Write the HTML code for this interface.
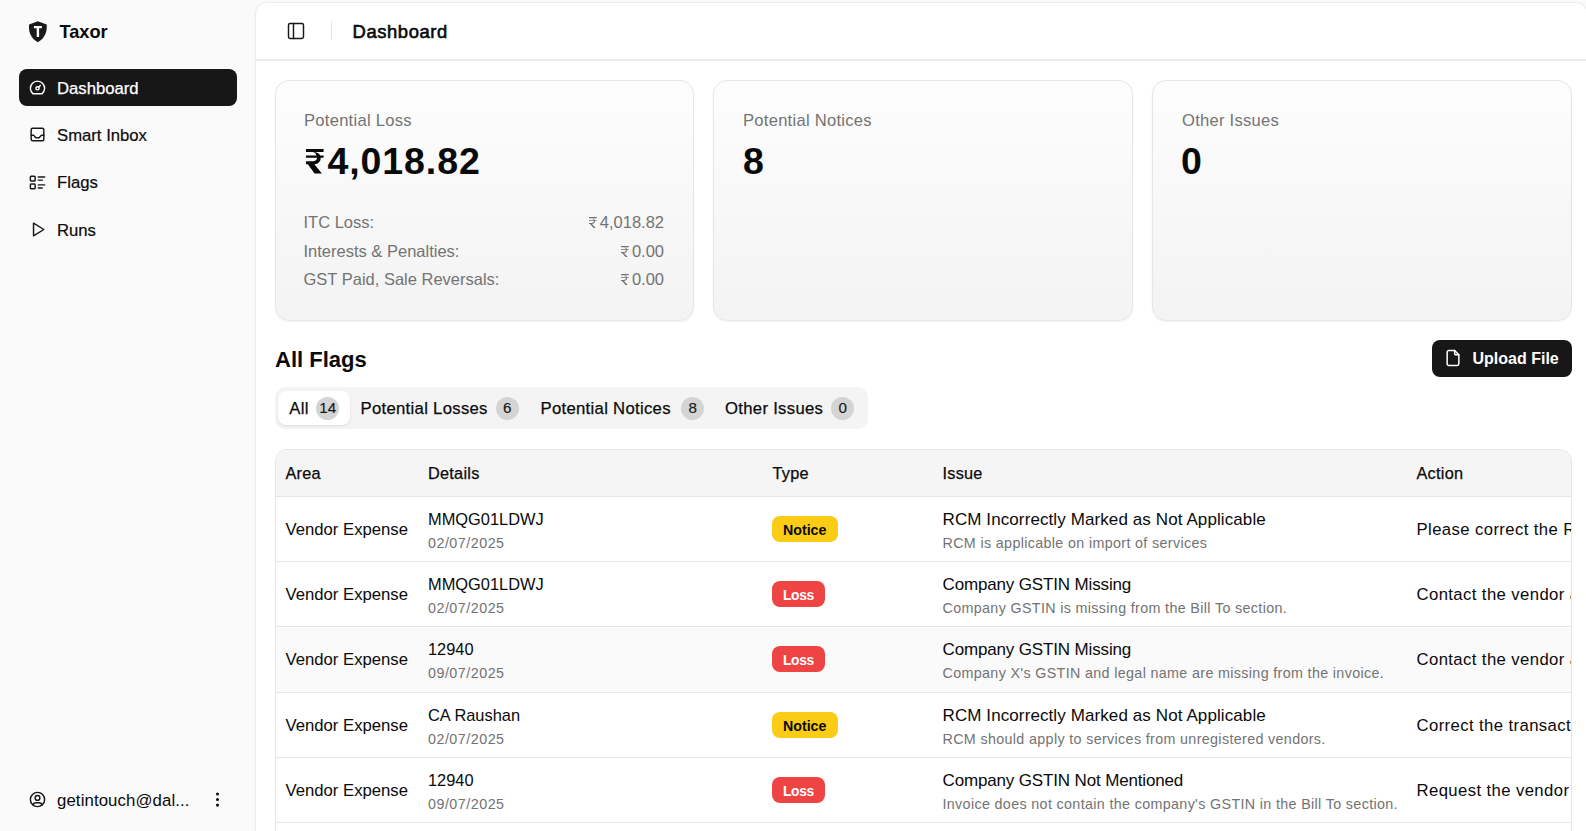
<!DOCTYPE html><html><head><meta charset="utf-8"><style>
*{box-sizing:border-box;margin:0;padding:0}
html,body{width:1586px;height:831px;overflow:hidden;background:#fafafa;font-family:"Liberation Sans",sans-serif;color:#0a0a0a}
.t{position:absolute;white-space:nowrap}
.ab{position:absolute;display:block}
.panel{position:absolute;left:255px;top:2px;width:1333px;height:900px;background:#fff;border-radius:12px;border:1px solid #ebebeb;box-shadow:0 1px 3px rgba(0,0,0,.03)}
.card{position:absolute;top:80px;height:241px;border:1px solid #e6e6e6;border-radius:14px;background:linear-gradient(to top,#f3f3f3,#fdfdfd);box-shadow:0 1px 2px rgba(0,0,0,.05)}
.badge{position:absolute;border-radius:50%;background:#d4d4d4;width:23px;height:23px}
.tbl{position:absolute;left:275px;top:449px;width:1297px;height:420px;border:1px solid #e6e6e6;border-radius:12px;overflow:hidden;background:#fff}
.row{position:absolute;left:0;width:100%;border-top:1px solid #e6e6e6}
.pill{position:absolute;height:26px;border-radius:8px}
</style></head><body>
<svg class="ab" style="left:29px;top:21px" width="18" height="22" viewBox="0 0 18 22"><path d="M8.8 0.2L17.7 3.4C17.9 6.5 17.6 10 16.5 12.8C15 16.5 12.5 19.3 8.8 21.2C5.1 19.3 2.6 16.5 1.1 12.8C0 10 -0.2 6.5 0.1 3.4Z" fill="#1a1a1a"/><path d="M4.9 4.9H12.9V7.2H10.1V15.9H7.7V7.2H4.9Z" fill="#fff"/></svg>
<div class="t" style="left:59.50px;top:23px;font-size:18.2px;line-height:18.2px;color:#0a0a0a;font-weight:700;">Taxor</div>
<div class="ab" style="left:19px;top:69px;width:218px;height:37px;background:#171717;border-radius:8px"></div>
<svg class="ab" style="left:28px;top:78.4px" width="19" height="19" viewBox="0 0 24 24" fill="none" stroke="#fff" stroke-width="1.8" stroke-linecap="round" stroke-linejoin="round"><path d="M12 13m-2 0a2 2 0 1 0 4 0a2 2 0 1 0 -4 0"/><path d="M13.45 11.55l2.05 -2.05"/><path d="M6.4 20a9 9 0 1 1 11.2 0z"/></svg>
<div class="t" style="left:57.00px;top:81px;font-size:16.7px;line-height:16.7px;color:#fff;-webkit-text-stroke:0.25px #fff;">Dashboard</div>
<svg class="ab" style="left:28px;top:125px" width="19" height="19" viewBox="0 0 24 24" fill="none" stroke="#171717" stroke-width="1.85" stroke-linecap="round" stroke-linejoin="round"><path d="M4 4m0 2a2 2 0 0 1 2 -2h12a2 2 0 0 1 2 2v12a2 2 0 0 1 -2 2h-12a2 2 0 0 1 -2 -2z"/><path d="M4 13h3l3 3h4l3 -3h3"/></svg>
<div class="t" style="left:57.00px;top:128px;font-size:16.7px;line-height:16.7px;color:#0a0a0a;-webkit-text-stroke:0.2px #0a0a0a;">Smart Inbox</div>
<svg class="ab" style="left:28px;top:173px" width="19" height="19" viewBox="0 0 24 24" fill="none" stroke="#171717" stroke-width="1.85" stroke-linecap="round" stroke-linejoin="round"><path d="M13 5h8"/><path d="M13 9h5"/><path d="M13 15h8"/><path d="M13 19h5"/><path d="M3 4m0 1a1 1 0 0 1 1 -1h4a1 1 0 0 1 1 1v4a1 1 0 0 1 -1 1h-4a1 1 0 0 1 -1 -1z"/><path d="M3 14m0 1a1 1 0 0 1 1 -1h4a1 1 0 0 1 1 1v4a1 1 0 0 1 -1 1h-4a1 1 0 0 1 -1 -1z"/></svg>
<div class="t" style="left:57.00px;top:175px;font-size:16.7px;line-height:16.7px;color:#0a0a0a;-webkit-text-stroke:0.2px #0a0a0a;">Flags</div>
<svg class="ab" style="left:28px;top:220px" width="19" height="19" viewBox="0 0 24 24" fill="none" stroke="#171717" stroke-width="1.85" stroke-linecap="round" stroke-linejoin="round"><path d="M7 4v16l13 -8z"/></svg>
<div class="t" style="left:57.00px;top:223px;font-size:16.7px;line-height:16.7px;color:#0a0a0a;-webkit-text-stroke:0.2px #0a0a0a;">Runs</div>
<svg class="ab" style="left:28px;top:790px" width="19" height="19" viewBox="0 0 24 24" fill="none" stroke="#171717" stroke-width="1.85" stroke-linecap="round" stroke-linejoin="round"><path d="M12 12m-9 0a9 9 0 1 0 18 0a9 9 0 1 0 -18 0"/><path d="M12 10m-3 0a3 3 0 1 0 6 0a3 3 0 1 0 -6 0"/><path d="M6.168 18.849a4 4 0 0 1 3.832 -2.849h4a4 4 0 0 1 3.834 2.855"/></svg>
<div class="t" style="left:57.00px;top:793px;font-size:16.8px;line-height:16.8px;color:#0a0a0a;letter-spacing:0.1px;">getintouch@dal...</div>
<svg class="ab" style="left:208px;top:790px" width="19" height="19" viewBox="0 0 24 24" fill="#171717" stroke="#171717" stroke-width="2"><circle cx="12" cy="5" r="1"/><circle cx="12" cy="12" r="1"/><circle cx="12" cy="19" r="1"/></svg>
<div class="panel"></div>
<div class="ab" style="left:256px;top:59px;width:1330px;height:1.5px;background:#ebebeb"></div>
<svg class="ab" style="left:286px;top:21px" width="20" height="20" viewBox="0 0 24 24" fill="none" stroke="#171717" stroke-width="1.75" stroke-linecap="round" stroke-linejoin="round"><rect width="18" height="18" x="3" y="3" rx="2"/><path d="M9 3v18"/></svg>
<div class="ab" style="left:331px;top:21px;width:1px;height:19px;background:#e5e5e5"></div>
<div class="t" style="left:352.50px;top:23px;font-size:18.4px;line-height:18.4px;color:#0a0a0a;letter-spacing:0.6px;-webkit-text-stroke:0.6px #0a0a0a;">Dashboard</div>
<div class="card" style="left:275px;width:419px"></div>
<div class="card" style="left:713px;width:420px"></div>
<div class="card" style="left:1152px;width:420px"></div>
<div class="t" style="left:304.00px;top:113px;font-size:16.6px;line-height:16.6px;color:#737373;letter-spacing:0.25px;">Potential Loss</div>
<svg class="ab" style="left:306.20px;top:149.20px" width="17.60" height="24.40" viewBox="0 0 72 100" preserveAspectRatio="none"><path d="M0 0H72V12H0Z M0 26.5H72V35.5H0Z M28 12C50 12 60 22 60 37C60 54 48 63 28 63H0V50H28C38 50 45 45 45 37C45 28 39 12 28 12Z M0 52H26L65 100H35Z" fill="#0a0a0a"/></svg>
<div class="t" style="left:327.50px;top:143px;font-size:37.5px;line-height:37.5px;color:#0a0a0a;font-weight:700;letter-spacing:0.9px;">4,018.82</div>
<div class="t" style="left:743.00px;top:113px;font-size:16.6px;line-height:16.6px;color:#737373;letter-spacing:0.25px;">Potential Notices</div>
<div class="t" style="left:743.00px;top:143px;font-size:37.5px;line-height:37.5px;color:#0a0a0a;font-weight:700;">8</div>
<div class="t" style="left:1182.00px;top:113px;font-size:16.6px;line-height:16.6px;color:#737373;letter-spacing:0.25px;">Other Issues</div>
<div class="t" style="left:1181.00px;top:143px;font-size:37.5px;line-height:37.5px;color:#0a0a0a;font-weight:700;">0</div>
<div class="t" style="left:303.50px;top:214px;font-size:16.5px;line-height:16.5px;color:#737373;">ITC Loss:</div>
<div class="t" style="right:922px;top:214px;font-size:16.5px;line-height:16.5px;color:#737373">4,018.82</div>
<svg class="ab" style="left:589.40px;top:217.00px" width="7.70" height="11.40" viewBox="0 0 72 100" preserveAspectRatio="none"><path d="M0 0H72V10H0Z M0 28H72V36H0Z M26 10C48 10 57 22 57 36C57 52 46 61 26 61H0V52H26C39 52 47 46 47 36C47 26 39 10 26 10Z M2 52H20L66 100H46Z" fill="#737373"/></svg>
<div class="t" style="left:303.50px;top:243px;font-size:16.5px;line-height:16.5px;color:#737373;">Interests &amp; Penalties:</div>
<div class="t" style="right:922px;top:243px;font-size:16.5px;line-height:16.5px;color:#737373">0.00</div>
<svg class="ab" style="left:621.40px;top:245.50px" width="7.70" height="11.40" viewBox="0 0 72 100" preserveAspectRatio="none"><path d="M0 0H72V10H0Z M0 28H72V36H0Z M26 10C48 10 57 22 57 36C57 52 46 61 26 61H0V52H26C39 52 47 46 47 36C47 26 39 10 26 10Z M2 52H20L66 100H46Z" fill="#737373"/></svg>
<div class="t" style="left:303.50px;top:271px;font-size:16.5px;line-height:16.5px;color:#737373;">GST Paid, Sale Reversals:</div>
<div class="t" style="right:922px;top:271px;font-size:16.5px;line-height:16.5px;color:#737373">0.00</div>
<svg class="ab" style="left:621.40px;top:273.90px" width="7.70" height="11.40" viewBox="0 0 72 100" preserveAspectRatio="none"><path d="M0 0H72V10H0Z M0 28H72V36H0Z M26 10C48 10 57 22 57 36C57 52 46 61 26 61H0V52H26C39 52 47 46 47 36C47 26 39 10 26 10Z M2 52H20L66 100H46Z" fill="#737373"/></svg>
<div class="t" style="left:275.00px;top:349px;font-size:22px;line-height:22px;color:#0a0a0a;font-weight:700;">All Flags</div>
<div class="ab" style="left:1432px;top:340px;width:140px;height:37px;background:#171717;border-radius:8px"></div>
<svg class="ab" style="left:1443px;top:348px" width="20" height="20" viewBox="0 0 24 24" fill="none" stroke="#fff" stroke-width="1.8" stroke-linecap="round" stroke-linejoin="round"><path d="M14 3v4a1 1 0 0 0 1 1h4"/><path d="M17 21h-10a2 2 0 0 1 -2 -2v-14a2 2 0 0 1 2 -2h7l5 5v11a2 2 0 0 1 -2 2z"/></svg>
<div class="t" style="left:1472.50px;top:351px;font-size:16px;line-height:16px;color:#fff;font-weight:700;">Upload File</div>
<div class="ab" style="left:275px;top:387px;width:593px;height:42px;background:#f4f4f4;border-radius:10px"></div>
<div class="ab" style="left:278px;top:391px;width:72px;height:34px;background:#fff;border-radius:8px;box-shadow:0 1px 3px rgba(0,0,0,.1)"></div>
<div class="t" style="left:289.30px;top:401px;font-size:16.7px;line-height:16.7px;color:#0a0a0a;letter-spacing:0.3px;-webkit-text-stroke:0.25px #0a0a0a;">All</div>
<div class="badge" style="left:316px;top:396.5px"></div>
<div class="t" style="left:316.30px;top:400px;font-size:15.2px;line-height:15.2px;color:#0a0a0a;width:23px;text-align:center;color:#171717;-webkit-text-stroke:0.15px #171717;">14</div>
<div class="t" style="left:360.50px;top:401px;font-size:16.7px;line-height:16.7px;color:#0a0a0a;letter-spacing:0.3px;-webkit-text-stroke:0.25px #0a0a0a;">Potential Losses</div>
<div class="badge" style="left:495.5px;top:396.5px"></div>
<div class="t" style="left:495.80px;top:400px;font-size:15.2px;line-height:15.2px;color:#0a0a0a;width:23px;text-align:center;color:#171717;-webkit-text-stroke:0.15px #171717;">6</div>
<div class="t" style="left:540.50px;top:401px;font-size:16.7px;line-height:16.7px;color:#0a0a0a;letter-spacing:0.3px;-webkit-text-stroke:0.25px #0a0a0a;">Potential Notices</div>
<div class="badge" style="left:681px;top:396.5px"></div>
<div class="t" style="left:681.30px;top:400px;font-size:15.2px;line-height:15.2px;color:#0a0a0a;width:23px;text-align:center;color:#171717;-webkit-text-stroke:0.15px #171717;">8</div>
<div class="t" style="left:725.00px;top:401px;font-size:16.7px;line-height:16.7px;color:#0a0a0a;letter-spacing:0.3px;-webkit-text-stroke:0.25px #0a0a0a;">Other Issues</div>
<div class="badge" style="left:831px;top:396.5px"></div>
<div class="t" style="left:831.30px;top:400px;font-size:15.2px;line-height:15.2px;color:#0a0a0a;width:23px;text-align:center;color:#171717;-webkit-text-stroke:0.15px #171717;">0</div>
<div class="tbl">
<div class="ab" style="left:0;top:0;width:100%;height:48px;background:#f5f5f5"></div>
<div class="t" style="left:9.50px;top:15px;font-size:16.3px;line-height:16.3px;color:#0a0a0a;letter-spacing:0.25px;-webkit-text-stroke:0.25px #0a0a0a;">Area</div>
<div class="t" style="left:152.00px;top:15px;font-size:16.3px;line-height:16.3px;color:#0a0a0a;letter-spacing:0.25px;-webkit-text-stroke:0.25px #0a0a0a;">Details</div>
<div class="t" style="left:496.50px;top:15px;font-size:16.3px;line-height:16.3px;color:#0a0a0a;letter-spacing:0.25px;-webkit-text-stroke:0.25px #0a0a0a;">Type</div>
<div class="t" style="left:666.50px;top:15px;font-size:16.3px;line-height:16.3px;color:#0a0a0a;letter-spacing:0.25px;-webkit-text-stroke:0.25px #0a0a0a;">Issue</div>
<div class="t" style="left:1140.50px;top:15px;font-size:16.3px;line-height:16.3px;color:#0a0a0a;letter-spacing:0.25px;-webkit-text-stroke:0.25px #0a0a0a;">Action</div>
<div class="row" style="top:46px;height:66px;background:#fff"></div>
<div class="t" style="left:9.50px;top:72px;font-size:16.7px;line-height:16.7px;color:#0a0a0a;">Vendor Expense</div>
<div class="t" style="left:152.00px;top:61px;font-size:16.4px;line-height:16.4px;color:#0a0a0a;">MMQG01LDWJ</div>
<div class="t" style="left:152.00px;top:86px;font-size:14.3px;line-height:14.3px;color:#737373;letter-spacing:0.5px;">02/07/2025</div>
<div class="pill" style="left:496px;top:66.3px;width:66px;background:#facc15"></div>
<div class="t" style="left:507.00px;top:73px;font-size:14.2px;line-height:14.2px;color:#0a0a0a;font-weight:700;">Notice</div>
<div class="t" style="left:666.50px;top:61px;font-size:17.0px;line-height:17.0px;color:#0a0a0a;letter-spacing:0.1px;">RCM Incorrectly Marked as Not Applicable</div>
<div class="t" style="left:666.50px;top:86px;font-size:14.3px;line-height:14.3px;color:#737373;letter-spacing:0.35px;">RCM is applicable on import of services</div>
<div class="t" style="left:1140.50px;top:72px;font-size:16.7px;line-height:16.7px;color:#0a0a0a;letter-spacing:0.4px;">Please correct the RCM applicability</div>
<div class="row" style="top:111px;height:66px;background:#fff"></div>
<div class="t" style="left:9.50px;top:137px;font-size:16.7px;line-height:16.7px;color:#0a0a0a;">Vendor Expense</div>
<div class="t" style="left:152.00px;top:126px;font-size:16.4px;line-height:16.4px;color:#0a0a0a;">MMQG01LDWJ</div>
<div class="t" style="left:152.00px;top:151px;font-size:14.3px;line-height:14.3px;color:#737373;letter-spacing:0.5px;">02/07/2025</div>
<div class="pill" style="left:496px;top:131.3px;width:53px;background:#ef4444"></div>
<div class="t" style="left:507.00px;top:139px;font-size:13.8px;line-height:13.8px;color:#fff;font-weight:700;letter-spacing:-0.35px;">Loss</div>
<div class="t" style="left:666.50px;top:126px;font-size:17.0px;line-height:17.0px;color:#0a0a0a;letter-spacing:-0.15px;">Company GSTIN Missing</div>
<div class="t" style="left:666.50px;top:151px;font-size:14.3px;line-height:14.3px;color:#737373;letter-spacing:0.35px;">Company GSTIN is missing from the Bill To section.</div>
<div class="t" style="left:1140.50px;top:137px;font-size:16.7px;line-height:16.7px;color:#0a0a0a;letter-spacing:0.4px;">Contact the vendor and request</div>
<div class="row" style="top:176px;height:66px;background:#fafafa"></div>
<div class="t" style="left:9.50px;top:202px;font-size:16.7px;line-height:16.7px;color:#0a0a0a;">Vendor Expense</div>
<div class="t" style="left:152.00px;top:191px;font-size:16.4px;line-height:16.4px;color:#0a0a0a;">12940</div>
<div class="t" style="left:152.00px;top:216px;font-size:14.3px;line-height:14.3px;color:#737373;letter-spacing:0.5px;">09/07/2025</div>
<div class="pill" style="left:496px;top:196.3px;width:53px;background:#ef4444"></div>
<div class="t" style="left:507.00px;top:204px;font-size:13.8px;line-height:13.8px;color:#fff;font-weight:700;letter-spacing:-0.35px;">Loss</div>
<div class="t" style="left:666.50px;top:191px;font-size:17.0px;line-height:17.0px;color:#0a0a0a;letter-spacing:-0.15px;">Company GSTIN Missing</div>
<div class="t" style="left:666.50px;top:216px;font-size:14.3px;line-height:14.3px;color:#737373;letter-spacing:0.35px;">Company X's GSTIN and legal name are missing from the invoice.</div>
<div class="t" style="left:1140.50px;top:202px;font-size:16.7px;line-height:16.7px;color:#0a0a0a;letter-spacing:0.4px;">Contact the vendor and request</div>
<div class="row" style="top:242px;height:66px;background:#fff"></div>
<div class="t" style="left:9.50px;top:268px;font-size:16.7px;line-height:16.7px;color:#0a0a0a;">Vendor Expense</div>
<div class="t" style="left:152.00px;top:257px;font-size:16.4px;line-height:16.4px;color:#0a0a0a;">CA Raushan</div>
<div class="t" style="left:152.00px;top:282px;font-size:14.3px;line-height:14.3px;color:#737373;letter-spacing:0.5px;">02/07/2025</div>
<div class="pill" style="left:496px;top:262.3px;width:66px;background:#facc15"></div>
<div class="t" style="left:507.00px;top:269px;font-size:14.2px;line-height:14.2px;color:#0a0a0a;font-weight:700;">Notice</div>
<div class="t" style="left:666.50px;top:257px;font-size:17.0px;line-height:17.0px;color:#0a0a0a;letter-spacing:0.1px;">RCM Incorrectly Marked as Not Applicable</div>
<div class="t" style="left:666.50px;top:282px;font-size:14.3px;line-height:14.3px;color:#737373;letter-spacing:0.35px;">RCM should apply to services from unregistered vendors.</div>
<div class="t" style="left:1140.50px;top:268px;font-size:16.7px;line-height:16.7px;color:#0a0a0a;letter-spacing:0.4px;">Correct the transaction</div>
<div class="row" style="top:307px;height:66px;background:#fff"></div>
<div class="t" style="left:9.50px;top:333px;font-size:16.7px;line-height:16.7px;color:#0a0a0a;">Vendor Expense</div>
<div class="t" style="left:152.00px;top:322px;font-size:16.4px;line-height:16.4px;color:#0a0a0a;">12940</div>
<div class="t" style="left:152.00px;top:347px;font-size:14.3px;line-height:14.3px;color:#737373;letter-spacing:0.5px;">09/07/2025</div>
<div class="pill" style="left:496px;top:327.3px;width:53px;background:#ef4444"></div>
<div class="t" style="left:507.00px;top:335px;font-size:13.8px;line-height:13.8px;color:#fff;font-weight:700;letter-spacing:-0.35px;">Loss</div>
<div class="t" style="left:666.50px;top:322px;font-size:17.0px;line-height:17.0px;color:#0a0a0a;letter-spacing:-0.15px;">Company GSTIN Not Mentioned</div>
<div class="t" style="left:666.50px;top:347px;font-size:14.3px;line-height:14.3px;color:#737373;letter-spacing:0.35px;">Invoice does not contain the company's GSTIN in the Bill To section.</div>
<div class="t" style="left:1140.50px;top:333px;font-size:16.7px;line-height:16.7px;color:#0a0a0a;letter-spacing:0.4px;">Request the vendor to</div>
<div class="row" style="top:372px;height:66px;background:#fff"></div>
<div class="t" style="left:9.50px;top:398px;font-size:16.7px;line-height:16.7px;color:#0a0a0a;">Vendor Expense</div>
<div class="t" style="left:152.00px;top:387px;font-size:16.4px;line-height:16.4px;color:#0a0a0a;">MMQG01LDWJ</div>
<div class="t" style="left:152.00px;top:412px;font-size:14.3px;line-height:14.3px;color:#737373;letter-spacing:0.5px;">02/07/2025</div>
<div class="pill" style="left:496px;top:392.3px;width:53px;background:#ef4444"></div>
<div class="t" style="left:507.00px;top:400px;font-size:13.8px;line-height:13.8px;color:#fff;font-weight:700;letter-spacing:-0.35px;">Loss</div>
<div class="t" style="left:666.50px;top:387px;font-size:17.0px;line-height:17.0px;color:#0a0a0a;letter-spacing:-0.15px;">Company GSTIN Missing</div>
<div class="t" style="left:666.50px;top:412px;font-size:14.3px;line-height:14.3px;color:#737373;letter-spacing:0.35px;">Company GSTIN is missing.</div>
<div class="t" style="left:1140.50px;top:398px;font-size:16.7px;line-height:16.7px;color:#0a0a0a;letter-spacing:0.4px;">Contact the vendor</div>
</div>
</body></html>
